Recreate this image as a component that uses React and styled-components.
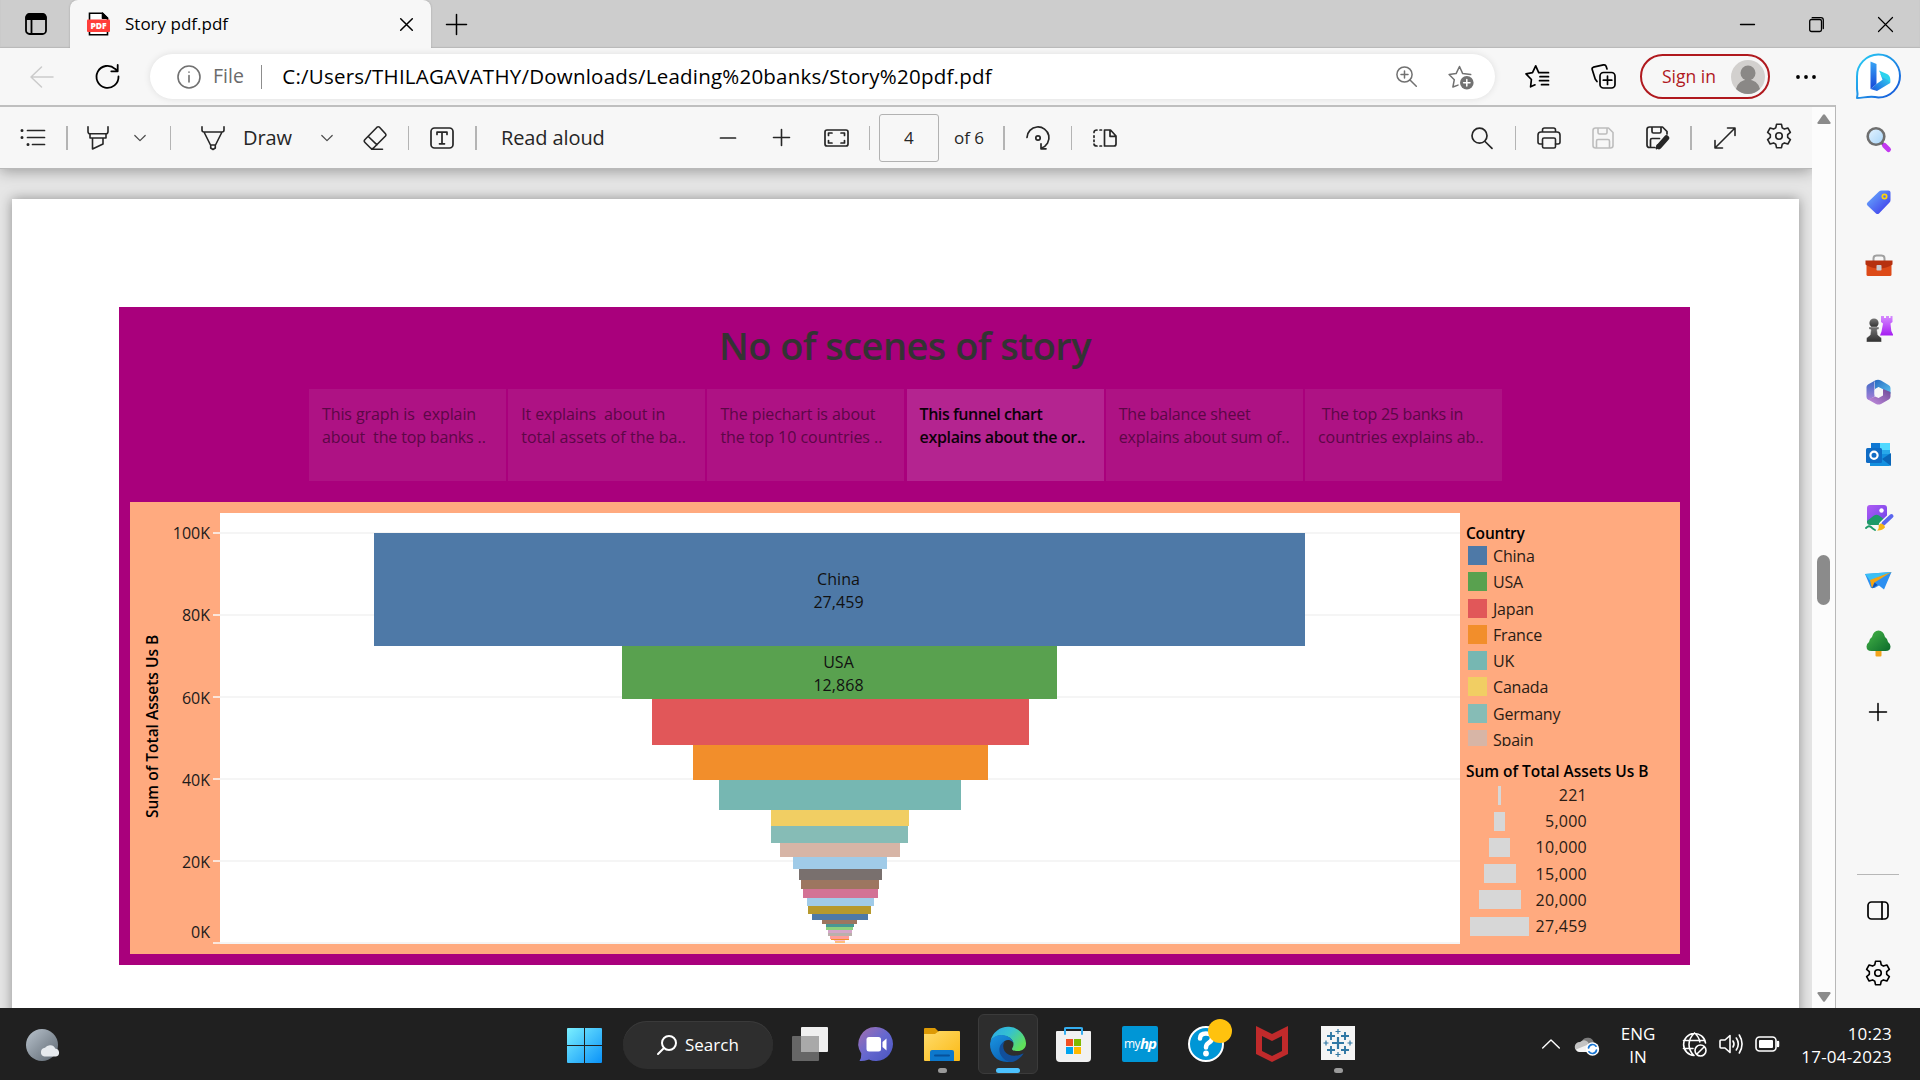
import React from "react";
import styled, { createGlobalStyle } from "styled-components";

const Global = createGlobalStyle`
  *, *::before, *::after { box-sizing: border-box; }
  html, body { margin: 0; padding: 0; overflow: hidden; }
  body { font-family: "Open Sans", "Noto Sans", sans-serif; color: #000; }
`;

const Screen = styled.div`
  width: 1920px;
  height: 1080px;
  display: flex;
  flex-direction: column;
  overflow: hidden;
  background: #f7f7f7;
`;

const Icon = styled.svg.attrs((p) => ({
  viewBox: p.viewBox || "0 0 24 24",
  width: p.$w || 24,
  height: p.$h || p.$w || 24,
  fill: p.fill || "none",
}))`
  flex: none;
  display: block;
  margin-left: ${(p) => p.$ml || 0}px;
  margin-top: ${(p) => p.$mt || 0}px;
  color: ${(p) => p.$c || "#000"};
  stroke: ${(p) => (p.$plain ? "none" : "currentColor")};
  stroke-width: ${(p) => p.$s || 1.6};
  stroke-linecap: round;
  stroke-linejoin: round;
  overflow: visible;
`;

const Label = styled.span`
  flex: none;
  white-space: pre;
  font-size: ${(p) => p.$size || 17}px;
  line-height: 1.36;
  letter-spacing: ${(p) => p.$ls || 0}px;
  color: ${(p) => p.$c || "#000"};
  margin-left: ${(p) => p.$ml || 0}px;
  margin-top: ${(p) => p.$mt || 0}px;
`;

const Rule = styled.i`
  flex: none;
  width: ${(p) => p.$w || 1}px;
  height: 24px;
  background: ${(p) => p.$c || "#b4b4b4"};
  margin-left: ${(p) => p.$ml || 0}px;
`;

/* ---------- tab strip ---------- */

const TabStrip = styled.header`
  flex: none;
  height: 48px;
  display: flex;
  align-items: center;
  background: #cdcdcd;
  box-shadow: inset 0 -1px 1px #b9b9b9;
`;

const Tab = styled.div`
  width: 361px;
  height: 48px;
  margin-left: 23px;
  padding: 0 18px 0 17px;
  display: flex;
  align-items: center;
  background: #f7f7f7;
  border-radius: 8px 8px 0 0;
  box-shadow: 0 0 2px #9b9b9b;
  clip-path: inset(0 -3px 0 -3px);
`;

const Push = styled.div`
  flex: 1;
`;

const WindowButtons = styled.div`
  display: flex;
  gap: 54px;
  padding-right: 27px;
`;

/* ---------- address toolbar ---------- */

const NavBar = styled.div`
  flex: none;
  height: 57px;
  display: flex;
  align-items: center;
  background: #f7f7f7;
`;

const Address = styled.div`
  width: 1345px;
  height: 45px;
  margin-left: 30px;
  padding-left: 27px;
  display: flex;
  align-items: center;
  background: #fff;
  border-radius: 23px;
  box-shadow: 0 0 7px rgba(0, 0, 0, 0.1);
`;

const SignIn = styled.div`
  width: 130px;
  height: 45px;
  margin-left: 24px;
  padding-left: 20px;
  display: flex;
  align-items: center;
  border: 2px solid #b0191e;
  border-radius: 23px;
`;

/* ---------- body ---------- */

const Body = styled.div`
  flex: none;
  height: 903px;
  display: flex;
`;

const Viewer = styled.main`
  width: 1836px;
  display: flex;
  border-top: 2px solid #bfbfbf;
  border-right: 1px solid #b8b8b8;
`;

const Pane = styled.div`
  width: 1812px;
  display: flex;
  flex-direction: column;
  overflow: hidden;
`;

const PdfBar = styled.div`
  flex: none;
  height: 62px;
  display: flex;
  align-items: center;
  background: #f7f7f7;
  border-bottom: 1px solid #b9b9b9;
  box-shadow: 0 2px 14px rgba(0, 0, 0, 0.34);
  z-index: 1;
`;

const PageInput = styled.div`
  width: 60px;
  height: 48px;
  margin-left: 9px;
  display: flex;
  align-items: center;
  justify-content: center;
  border: 1px solid #b2b2b2;
  border-radius: 3px;
`;

const Canvas = styled.div`
  flex: 1;
  padding: 30px 13px 0 12px;
  background: #e6e6e6;
  overflow: hidden;
`;

const Sheet = styled.div`
  height: 900px;
  padding: 108px 109px 0 107px;
  background: #fff;
  box-shadow: 0 0 12px rgba(0, 0, 0, 0.38);
`;

const Scrollbar = styled.div`
  flex: 1;
  display: flex;
  flex-direction: column;
  align-items: center;
  padding: 7px 0 6px;
  background: #fcfcfc;
`;

const Thumb = styled.div`
  width: 13px;
  height: 50px;
  margin: 431px 0 auto;
  border-radius: 7px;
  background: #8b8b8b;
`;

/* ---------- story dashboard ---------- */

const Story = styled.section`
  height: 658px;
  display: flex;
  flex-direction: column;
  background: #a9007c;
  padding: 15px 10px 11px 11px;
`;

const Title = styled.h1`
  margin: 0;
  height: 52px;
  line-height: 47px;
  text-align: center;
  font-size: 38px;
  font-weight: 600;
  letter-spacing: -0.55px;
  color: #333;
`;

const Points = styled.div`
  display: flex;
  gap: 2.2px;
  margin: 15px 0 21px 179px;
`;

const Point = styled.div`
  width: 197px;
  height: 92px;
  padding: 14px 0 0 13px;
  white-space: pre;
  font-size: 16px;
  line-height: 23.4px;
  font-weight: ${(p) => (p.$active ? 600 : 500)};
  color: ${(p) => (p.$active ? "#0c0009" : "#5c0747")};
  background: ${(p) => (p.$active ? "#b42490" : "#ae1284")};
`;

const PointLine = styled.div`
  letter-spacing: ${(p) => p.$ls}px;
`;

const Chart = styled.div`
  height: 452px;
  display: flex;
  padding-top: 11px;
  background: #ffaa7f;
`;

const AxisTitle = styled.div`
  width: 44px;
  height: 427px;
  display: flex;
  align-items: center;
  justify-content: center;
  writing-mode: vertical-rl;
  transform: rotate(180deg);
  font-size: 15.5px;
  font-weight: 600;
`;

const AxisLabels = styled.div`
  width: 36px;
  padding-top: 9px;
  display: flex;
  flex-direction: column;
  align-items: flex-end;
  gap: 60.3px;
  & > :last-child { margin-top: -12px; }
`;

const AxisLabel = styled.span`
  height: 22px;
  line-height: 22px;
  font-size: 16px;
  color: #1b1b1b;
`;

const Lines = styled.div`
  grid-area: 1 / 1;
  width: ${(p) => p.$w};
  height: 431px;
  margin-left: ${(p) => p.$ml || 0}px;
  padding-top: 19px;
  display: flex;
  flex-direction: column;
  justify-content: space-between;
`;

const Line = styled.i`
  height: 2px;
  background: ${(p) => p.$c};
`;

const Plot = styled.div`
  width: 1240px;
  height: 431px;
  display: grid;
  background: #fff;
`;

const Funnel = styled.div`
  grid-area: 1 / 1;
  padding-top: 20px;
  display: flex;
  flex-direction: column;
  align-items: center;
`;

const Bar = styled.div`
  flex: none;
  width: ${(p) => p.$w}px;
  height: ${(p) => p.$h}px;
  margin-right: ${(p) => p.$mr || 0}px;
  background: ${(p) => p.$c};
  display: flex;
  align-items: center;
  justify-content: center;
  white-space: pre;
  text-align: center;
  font-size: 16px;
  line-height: 23.5px;
  color: #111;
`;

const BarLabel = styled.span`
  padding: 3px 2px 0 0;
  letter-spacing: 0.05px;
`;

const Legends = styled.aside`
  padding: 9px 0 0 6px;
  display: flex;
  flex-direction: column;
`;

const LegendTitle = styled.h2`
  margin: 0;
  height: 22px;
  line-height: 22px;
  font-size: 15.5px;
  font-weight: 600;
  letter-spacing: ${(p) => p.$ls || 0}px;
  white-space: nowrap;
`;

const ColorList = styled.div`
  height: 202px;
  padding: 2px 0 0 2px;
  margin-bottom: 14px;
  overflow: hidden;
`;

const ColorRow = styled.div`
  height: 26.25px;
  display: flex;
  gap: 6px;
  font-size: 16px;
  letter-spacing: -0.2px;
  line-height: 21px;
  color: #2a1c15;
`;

const Swatch = styled.i`
  width: 19px;
  height: 19px;
  background: ${(p) => p.$c};
`;

const SizeRow = styled.div`
  height: 26.2px;
  display: grid;
  grid-template-columns: 67px 54px;
  align-items: center;
  font-size: 16px;
  letter-spacing: 0.25px;
  color: #2a1c15;
  & > span { text-align: right; }
`;

const SizeMark = styled.i`
  justify-self: center;
  width: ${(p) => p.$w}px;
  height: 19px;
  background: #d7d7d7;
`;

/* ---------- edge sidebar ---------- */

const Sidebar = styled.nav`
  width: 84px;
  padding: 3px 0 4px;
  display: flex;
  flex-direction: column;
`;

const Slot = styled.div`
  height: 63px;
  display: flex;
  align-items: center;
  justify-content: center;
  margin-top: ${(p) => p.$mt || 0}px;
`;

const SideRule = styled.i`
  width: 42px;
  height: 1px;
  margin: auto 21px 3px;
  background: #b7b7b7;
`;

/* ---------- taskbar ---------- */

const Taskbar = styled.footer`
  flex: none;
  height: 72px;
  display: flex;
  align-items: center;
  background: #202020;
`;

const SearchPill = styled.div`
  width: 150px;
  height: 48px;
  margin-top: 1px;
  margin-left: 21px;
  padding-left: 34px;
  display: flex;
  align-items: center;
  border-radius: 24px;
  background: #2e2e2e;
  box-shadow: inset 0 1px 0 #3a3a3a;
`;

const Task = styled.div`
  width: 60px;
  height: 60px;
  margin-left: ${(p) => p.$ml || 0}px;
  padding-top: 11px;
  display: flex;
  flex-direction: column;
  align-items: center;
  justify-content: space-between;
  border: 1px solid ${(p) => (p.$on ? "#3b3b3b" : "transparent")};
  border-radius: 6px;
  background: ${(p) => (p.$on ? "#2d2d2d" : "transparent")};
`;

const Running = styled.i`
  width: ${(p) => p.$w}px;
  height: 5px;
  border-radius: 3px;
  background: ${(p) => p.$c};
`;

const HpTile = styled.div`
  width: 36px;
  height: 36px;
  display: flex;
  align-items: center;
  justify-content: center;
  border-radius: 2px;
  background: #0096d6;
  color: #fff;
  font-size: 12px;
  line-height: 1;
  letter-spacing: -0.6px;
  & > b { font-style: italic; font-size: 15px; letter-spacing: -1px; padding-bottom: 1px; }
`;

const Stack = styled.div`
  margin-top: 1px;
  margin-left: ${(p) => p.$ml}px;
  width: ${(p) => p.$w}px;
  text-align: ${(p) => p.$align};
  white-space: pre;
  font-size: 17px;
  line-height: 23px;
  letter-spacing: ${(p) => p.$ls || 0}px;
  color: #fff;
`;

/* ---------- data ---------- */

const points = [
  [["This graph is  explain", -0.1], ["about  the top banks ..", -0.15]],
  [["It explains  about in", -0.1], ["total assets of the ba..", 0.05]],
  [["The piechart is about", -0.1], ["the top 10 countries ..", -0.03]],
  [["This funnel chart", -0.45], ["explains about the or..", -0.34]],
  [["The balance sheet", -0.2], ["explains about sum of..", -0.12]],
  [[" The top 25 banks in", -0.25], ["countries explains ab..", -0.05]],
];

const bars = [
  [931, 113, "#4e79a7", "China\n27,459", 1],
  [435, 53, "#59a14f", "USA\n12,868", 1],
  [377, 46, "#e15759"],
  [295, 35, "#f28e2b"],
  [242, 30, "#76b7b2"],
  [138, 16, "#f1ce63"],
  [137, 17, "#86bcb6", null, 1],
  [120, 14, "#d7b5a6"],
  [94, 12, "#a0cbe8"],
  [83, 11, "#79706e"],
  [78, 9, "#9d7660"],
  [75, 9, "#d37295"],
  [67, 8, "#a0cbe8"],
  [63, 8, "#b6992d", null, 1],
  [56, 6, "#4e79a7"],
  [35, 4, "#9d7660", null, 1],
  [28, 3, "#499894"],
  [27, 3, "#8cd17d", null, 1],
  [24, 3, "#d4a6c8"],
  [24, 3, "#bab0ac"],
  [19, 3, "#ff9d9a", null, 1],
  [18, 1, "#f28e2b"],
  [11, 1, "#fabfd2", null, 1],
  [10, 2, "#ffbe7d"],
];

const countries = [
  ["China", "#4e79a7"],
  ["USA", "#59a14f"],
  ["Japan", "#e15759"],
  ["France", "#f28e2b"],
  ["UK", "#76b7b2"],
  ["Canada", "#f1ce63"],
  ["Germany", "#86bcb6"],
  ["Spain", "#d7b5a6"],
];

const sizes = [
  ["221", 3],
  ["5,000", 11],
  ["10,000", 21],
  ["15,000", 32],
  ["20,000", 42],
  ["27,459", 59],
];

const ink = "#262626";

const Chevron = (p) => (
  <Icon $w={12} $h={8} viewBox="0 0 12 8" $c="#4a4a4a" $s={1.2} {...p}>
    <path d="M.8 1.5 6 6.7l5.2-5.2" />
  </Icon>
);

const Gear = (p) => (
  <Icon viewBox="0 0 24 24" $s={1.5} {...p}>
    <path d="M9.7 1.2h4.6l.7 3.3 2 1.1 3.200-1 2.3 4-2.500 2.200v2.400l2.500 2.200-2.300 4-3.200-1-2 1.100-.7 3.300H9.700L9 19.500l-2-1.100-3.200 1-2.300-4L4 13.200v-2.400L1.500 8.600l2.300-4 3.200 1 2-1.100z" />
    <circle cx="12" cy="12" r="3" />
  </Icon>
);

function TopTabs() {
  return (
    <TabStrip>
      <Icon $w={22} $ml={25} viewBox="0 0 22 22" $s={1.8}>
        <rect x="1" y="1" width="20" height="20" rx="3.5" />
        <path d="M1.500 6V4.500a3 3 0 0 1 3-3h13a3 3 0 0 1 3 3V6z" fill="#000" />
        <path d="M6.500 7v13.500" />
      </Icon>
      <Tab>
        <Icon $w={23} $h={24} viewBox="0 0 23 24" $s={1.6}>
          <path d="M2.500 1.200h13l5 5v16.600h-18z" fill="#fff" strokeLinejoin="miter" />
          <path d="M15.500 1.200v5h5z" fill="#000" />
          <rect x="0" y="7.500" width="23" height="12.500" rx="1" fill="#ff3e3a" stroke="none" />
          <text x="11.500" y="17" fill="#fff" stroke="none" fontSize="8.500" fontWeight="800" textAnchor="middle">PDF</text>
        </Icon>
        <Label $ml={15} $size={17}>Story pdf.pdf</Label>
        <Push />
        <Icon $w={13} viewBox="0 0 13 13" $s={1.5}><path d="m.7.7 11.600 11.600M12.300.7.7 12.300" /></Icon>
      </Tab>
      <Icon $w={21} $ml={15} viewBox="0 0 21 21" $s={1.5}><path d="M10.500.5v20M.5 10.500h20" /></Icon>
      <Push />
      <WindowButtons>
        <Icon $w={15} viewBox="0 0 15 15" $s={1.3}><path d="M.5 7.500h14" /></Icon>
        <Icon $w={15} viewBox="0 0 15 15" $s={1.3}>
          <rect x=".7" y="2.500" width="11.800" height="12" rx="1.800" />
          <path d="M3.200.7H12a2.300 2.300 0 0 1 2.300 2.300v8.500" />
        </Icon>
        <Icon $w={15} viewBox="0 0 15 15" $s={1.2}><path d="m.5.5 14 14M14.500.5l-14 14" /></Icon>
      </WindowButtons>
    </TabStrip>
  );
}

function Navigation() {
  return (
    <NavBar>
      <Icon $w={24} $h={22} $ml={30} viewBox="0 0 24 22" $c="#cbcbcb" $s={1.5}><path d="M23 11H1M11.500 1 1 11l10.500 10" /></Icon>
      <Icon $w={25} $ml={41} viewBox="0 0 25 25" $s={1.8}><path d="M23.500 12.500A11 11 0 1 1 20 4.800L22.700 7M22.700 1v6.300h-6.400" /></Icon>
      <Address>
        <Icon $w={24} viewBox="0 0 24 24" $c="#717171" $s={1.6}>
          <circle cx="12" cy="12" r="11" /><path d="M12 10.500V17M12 7v.3" />
        </Icon>
        <Label $ml={12} $size={19.5} $c="#6b6b6b">File</Label>
        <Rule $ml={17} $w={1.5} $c="#8d8d8d" />
        <Label $ml={20} $size={20.5} $ls={0.22}>C:/Users/THILAGAVATHY/Downloads/Leading%20banks/Story%20pdf.pdf</Label>
        <Push />
        <Icon $w={21} viewBox="0 0 21 21" $c="#717171" $s={1.500}>
          <circle cx="8.500" cy="8.500" r="7.600" /><path d="m14 14 6.300 6.300M8.500 5v7M5 8.500h7" />
        </Icon>
        <Icon $w={26} $ml={31} viewBox="0 0 26 25" $c="#717171" $s={1.500}>
          <path d="M10 20.600 4.900 22.500l1.400-7.300L1.100 10l7-.9L11.500 2l3.200 7.100 8 1" />
          <circle cx="18.800" cy="18.200" r="6.800" fill="#717171" stroke="none" />
          <path d="M18.800 15v6.400M15.600 18.200H22" stroke="#fff" />
        </Icon>
        <Icon $w={21} viewBox="0 0 21 21" $plain />
      </Address>
      <Icon $w={25} $ml={30} viewBox="0 0 25 24" $s={1.700}>
        <path d="M10 20.300l-4.400 2 .8-7.300L1 9.300l6.500-1.100L10.700 1.300l3 6.900h9.800M15 12.200h8.500M14.500 16.200h9M16.500 20.200h7" />
      </Icon>
      <Icon $w={25} $ml={41} viewBox="0 0 25 25" $s={1.700}>
        <rect x="9" y="8.500" width="15" height="15.500" rx="3.500" />
        <path d="M16.500 12v8.500M12.300 16.200h8.500M6 17.500 4.200 15 1.200 5.600c-.3-1 0-2 1.200-2.400l10-2.300c1.500-.3 2.400.2 2.800 1.500l.8 2.600" />
      </Icon>
      <SignIn>
        <Label $size={17.5} $c="#b0191e">Sign in</Label>
        <Icon $w={34} $ml={15} viewBox="0 0 34 34" $plain>
          <circle cx="17" cy="17" r="17" fill="#d2d0ce" />
          <circle cx="17" cy="13" r="7.500" fill="#8a8886" />
          <path d="M5 29a12.300 12.300 0 0 1 24 0 17 17 0 0 1-24 0z" fill="#8a8886" />
        </Icon>
      </SignIn>
      <Icon $w={20} $h={4} $ml={26} viewBox="0 0 20 4" $plain fill="#000">
        <circle cx="2" cy="2" r="1.900" /><circle cx="10" cy="2" r="1.900" /><circle cx="18" cy="2" r="1.900" />
      </Icon>
      <Icon $w={45} $ml={40} viewBox="0 0 45 45" $plain>
        <defs>
          <linearGradient id="bingRing" x1="0" y1="0" x2="1" y2="1"><stop offset="0" stopColor="#29d0f5" /><stop offset="1" stopColor="#1450d8" /></linearGradient>
          <linearGradient id="bingStem" x1="0" y1="0" x2="0" y2="1"><stop offset="0" stopColor="#37a5f5" /><stop offset="1" stopColor="#1646d8" /></linearGradient>
          <linearGradient id="bingBowl" x1="0" y1="1" x2="1" y2="0"><stop offset="0" stopColor="#1c56e0" /><stop offset="1" stopColor="#35dff0" /></linearGradient>
        </defs>
        <path d="M1 44q1-4 0-9V22.500A21.500 21.500 0 1 1 22.500 43.500C13 41.500 8 44 1 44z" fill="#fff" stroke="url(#bingRing)" strokeWidth="2" />
        <path d="m14.500 7.500 6 2.400v20l-6 5z" fill="url(#bingStem)" />
        <path d="m20.500 30 6-4.200-2.200-6 7.500 3.200c2.500 1.300 3 3.500 2.400 6L21 37l-6.500-2z" fill="url(#bingBowl)" />
        <path d="m23 16.500 8 3.500c3.500 2 4 5.500 2.500 8.500-.8-2-1.700-2.800-3.500-3.500l-4-2z" fill="#2cd3ee" />
      </Icon>
    </NavBar>
  );
}

function PdfToolbar() {
  return (
    <PdfBar>
      <Icon $w={25} $h={17} $ml={20} viewBox="0 0 25 17" $c={ink} $s={1.700}>
        <path d="M7.500 1.500h17M7.500 8.500h17M12.500 15.500h12" />
        <path d="M2 1.500v.1M2 8.500v.1M8 15.500v.1" strokeWidth="3" />
      </Icon>
      <Rule $ml={21} $w={2} />
      <Icon $w={22} $h={24} $ml={19} viewBox="0 0 22 24" $c={ink} $s={1.600}>
        <path d="M1 .7v4.800q0 2.300 2 2.300h16q2 0 2-2.300V.7M3 8v4h16V8M5.500 12v11l10.500-5v-6" />
      </Icon>
      <Chevron $ml={25} />
      <Rule $ml={24} />
      <Icon $w={24} $h={24} $ml={30} viewBox="0 0 24 24" $c={ink} $s={1.600}>
        <path d="M1 .7V4q0 2 2 2h18q2 0 2-2V.7M3 6l6.500 13h5L21 6M9.700 19v3l2.300 1.500 2.300-1.500v-3" />
      </Icon>
      <Label $ml={18} $mt={1} $size={20} $c={ink} $ls={-0.1}>Draw</Label>
      <Chevron $ml={29} />
      <Icon $w={24} $h={24} $ml={30} viewBox="0 0 24 24" $c={ink} $s={1.600}>
        <path d="M14 1.200 2 13.500q-1.500 1.500 0 3l5.500 5.500q1.500 1.500 3 0L22.500 10q1-1.200 0-2.300L16.500 1.200q-1.300-1-2.500 0zM5.300 10.500l8.700 8.300M8.500 23.300h11" />
      </Icon>
      <Rule $ml={21} />
      <Icon $w={24} $h={22} $ml={21} viewBox="0 0 24 22" $c={ink} $s={1.700}>
        <rect x="1" y="1" width="22" height="20" rx="3.500" />
        <path d="M7 7.500V5.200h10v2.300M12 5.200v11.600M9.500 16.800h5" />
      </Icon>
      <Rule $ml={21} $w={2} />
      <Label $ml={24} $mt={1} $size={20} $c={ink} $ls={-0.1}>Read aloud</Label>
      <Push />
      <Icon $w={16} viewBox="0 0 16 16" $c={ink} $s={1.700}><path d="M.5 8h15" /></Icon>
      <Icon $w={17} $ml={37} viewBox="0 0 17 17" $c={ink} $s={1.600}><path d="M8.500.5v16M.5 8.500h16" /></Icon>
      <Icon $w={25} $h={18} $ml={34} viewBox="0 0 25 18" $c={ink} $s={1.700}>
        <rect x="1" y="1" width="23" height="16" rx="2" />
        <path d="M4.500 6.500V4H8M17 4h3.500v2.500M20.500 11.500V14H17M8 14H4.500v-2.500" />
      </Icon>
      <Rule $ml={20} />
      <PageInput><Label $size={17} $c={ink}>4</Label></PageInput>
      <Label $ml={15} $size={17} $c={ink}>of 6</Label>
      <Rule $ml={19} $w={2} />
      <Icon $w={24} $h={24} $ml={21} viewBox="0 0 24 24" $c={ink} $s={1.700}>
        <path d="M1 11.500A11 10.800 0 1 1 15.500 22M20 22.800h-5v-5" /><circle cx="12" cy="12" r="2.200" />
      </Icon>
      <Rule $ml={21} />
      <Icon $w={24} $h={18} $ml={21} viewBox="0 0 24 18" $c={ink} $s={1.700}>
        <path d="M11.500 1h6L23 7v8q0 2-2 2h-9.500zM17 1.200V7.300h5.800" />
        <path d="M8.500 1H7M4 1Q1 1 1 3.500M1 6.800v1.500M1 11v1.500M1 15q0 2 3 2M7 17h1.500" />
      </Icon>
      <Icon $w={22} $ml={354} viewBox="0 0 22 22" $c={ink} $s={1.700}>
        <circle cx="8.500" cy="8.700" r="7.500" /><path d="m14 14.500 7 6.800" />
      </Icon>
      <Rule $ml={22} />
      <Icon $w={24} $h={22} $ml={21} viewBox="0 0 24 22" $c={ink} $s={1.600}>
        <path d="M5.500 5V3q0-2 2-2h9q2 0 2 2v2M5.500 17H3q-2 0-2-2V8q0-3 3-3h16q3 0 3 3v7q0 2-2 2h-2.500" />
        <rect x="5.500" y="11" width="13" height="10" rx="1.500" />
      </Icon>
      <Icon $w={22} $ml={31} viewBox="0 0 22 22" $c="#bdbdbd" $s={1.600}>
        <path d="M3.500 1h13L21 5.500v13q0 2.500-2.500 2.500h-15Q1 21 1 18.500v-15Q1 1 3.500 1zM6 1v4.500q0 1.500 1.500 1.500h6q1.500 0 1.500-1.500V1M4.500 21v-7q0-1.500 1.500-1.500h10q1.500 0 1.500 1.500v7" />
      </Icon>
      <Icon $w={23} $ml={32} viewBox="0 0 23 23" $c={ink} $s={1.700}>
        <path d="M9 21.500H3.500Q1 21.500 1 19V3.500Q1 1 3.500 1h13L21 5.500V8M6 1v4.500Q6 7 7.500 7h6Q15 7 15 5.500V1M4.500 21v-7q0-1.500 1.500-1.500h7.500" />
        <path d="m13 20.500 7.500-8.500" strokeWidth="5.500" /><path d="m10.500 22.500 1-3.500 2 2z" fill={ink} />
      </Icon>
      <Rule $ml={21} $w={2} />
      <Icon $w={22} $ml={22} viewBox="0 0 22 22" $c={ink} $s={1.600}>
        <path d="M1.500 20.500 20.500 1.500M13.500 1H21v7.500M1 13.500V21h7.500" />
      </Icon>
      <Gear $w={26} $ml={30} $mt={-3} $c={ink} $s={1.500} />
      <Icon $w={20} $plain />
    </PdfBar>
  );
}

function Dashboard() {
  return (
    <Story>
      <Title>No of scenes of story</Title>
      <Points>
        {points.map((lines, i) => (
          <Point key={i} $active={i === 3}>
            {lines.map(([text, ls]) => <PointLine key={text} $ls={ls}>{text}</PointLine>)}
          </Point>
        ))}
      </Points>
      <Chart>
        <AxisTitle>Sum of Total Assets Us B</AxisTitle>
        <AxisLabels>
          {["100K", "80K", "60K", "40K", "20K", "0K"].map((t) => <AxisLabel key={t}>{t}</AxisLabel>)}
        </AxisLabels>
        <Lines $w="7px" $ml={3}>{[0, 1, 2, 3, 4, 5].map((i) => <Line key={i} $c="#fbe6dc" />)}</Lines>
        <Plot>
          <Lines $w="100%">{[0, 1, 2, 3, 4, 5].map((i) => <Line key={i} $c="#f5f5f5" />)}</Lines>
          <Funnel>
            {bars.map(([w, h, c, text, mr], i) => (
              <Bar key={i} $w={w} $h={h} $c={c} $mr={mr}>{text && <BarLabel>{text}</BarLabel>}</Bar>
            ))}
          </Funnel>
        </Plot>
        <Legends>
          <LegendTitle $ls={-0.2}>Country</LegendTitle>
          <ColorList>
            {countries.map(([name, c]) => (
              <ColorRow key={name}><Swatch $c={c} />{name}</ColorRow>
            ))}
          </ColorList>
          <LegendTitle $ls={-0.03}>Sum of Total Assets Us B</LegendTitle>
          {sizes.map(([n, w]) => (
            <SizeRow key={n}><SizeMark $w={w} /><span>{n}</span></SizeRow>
          ))}
        </Legends>
      </Chart>
    </Story>
  );
}

function EdgeSidebar() {
  return (
    <Sidebar>
      <Slot>
        <Icon $w={25} viewBox="0 0 25 25" $plain>
          <defs><linearGradient id="lens" x1="0" y1="0" x2="1" y2="1"><stop offset="0" stopColor="#e6f4ff" /><stop offset="1" stopColor="#a5d3f8" /></linearGradient></defs>
          <path d="m15 15 3 3" stroke="#555" strokeWidth="3" />
          <path d="m18.500 18.500 4 4" stroke="#c239f0" strokeWidth="5" strokeLinecap="round" />
          <circle cx="10" cy="9.500" r="8.300" fill="url(#lens)" stroke="#6f6f6f" strokeWidth="2.600" />
        </Icon>
      </Slot>
      <Slot>
        <Icon $w={25} viewBox="0 0 25 25" $plain>
          <defs><linearGradient id="tag" x1="0" y1="0" x2="1" y2="1"><stop offset="0" stopColor="#6cb6ff" /><stop offset="1" stopColor="#3a2ee8" /></linearGradient></defs>
          <path d="M13 1.500Q14 .5 15.500.5h7q2 0 2 2V10q0 1.500-1 2.500L13 23.500q-1.500 1.200-3 0L1.500 15.500q-1.500-1.500 0-3z" fill="url(#tag)" />
          <circle cx="18.500" cy="6.500" r="2.200" fill="none" stroke="#fcd30a" strokeWidth="1.700" />
        </Icon>
      </Slot>
      <Slot>
        <Icon $w={28} $h={24} $mt={1} $ml={1} viewBox="0 0 28 24" $plain>
          <path d="M8.500 7V4.500q0-3 3-3h5q3 0 3 3V7" fill="none" stroke="#a0a0a0" strokeWidth="2" />
          <rect x="1.500" y="8" width="25" height="14" rx="1.500" fill="#dd4a18" />
          <path d="M.5 6.500h27v4q-6 4-13.500 4t-13.500-4z" fill="#b6300f" />
          <rect x="11.500" y="11" width="5" height="5.500" rx=".8" fill="#c9c9cf" />
        </Icon>
      </Slot>
      <Slot>
        <Icon $w={28} $h={28} $ml={1} viewBox="0 0 28 28" $plain>
          <defs>
            <linearGradient id="pawn" x1="0" y1="0" x2="0" y2="1"><stop offset="0" stopColor="#777" /><stop offset="1" stopColor="#2f2f2f" /></linearGradient>
            <linearGradient id="rook" x1="0" y1="0" x2="0" y2="1"><stop offset="0" stopColor="#d68bff" /><stop offset="1" stopColor="#a51df2" /></linearGradient>
          </defs>
          <path d="M16 1h3v2h2V1h3v2h1.500V1h2v6l-2 1.500.8 7.500 1.700 3.500v1H15l1.500-4L18 8.500 16 7z" fill="url(#rook)" />
          <circle cx="9" cy="8" r="4.600" fill="url(#pawn)" />
          <path d="M4 12h10v2l-2 .7.8 5.300 3.700 3v4H1.500v-4L5.200 20l.8-5.300L4 14z" fill="url(#pawn)" stroke="#f7f7f7" strokeWidth=".4" />
        </Icon>
      </Slot>
      <Slot>
        <Icon $w={25} $h={26} viewBox="0 0 25 26" $plain>
          <defs>
            <linearGradient id="m1" x1="0" y1="0" x2="0" y2="1"><stop offset="0" stopColor="#3c6bc5" /><stop offset="1" stopColor="#a67fd8" /></linearGradient>
            <linearGradient id="m2" x1="0" y1="0" x2="1" y2="1"><stop offset="0" stopColor="#2868c0" /><stop offset="1" stopColor="#59c4f0" /></linearGradient>
            <linearGradient id="m3" x1="0" y1="1" x2="1" y2="0"><stop offset="0" stopColor="#c48fe0" /><stop offset="1" stopColor="#6c4796" /></linearGradient>
          </defs>
          <path d="M9.500 1.200 2 5.500Q.5 6.500.5 8v10q0 2 2 3l6-3.500V3z" fill="url(#m1)" />
          <path d="M9 1.500q3-1.500 6 0L22.500 6q2 1 2 3v6L17 10.200 12.500 8 9 10z" fill="url(#m2)" />
          <path d="M24.500 13v4.500q0 2-1.700 3L15 25q-2.500 1-5 0l-8-4.500 7-3 3.500 1.500 4.500-2.500V10z" fill="url(#m3)" />
          <path d="M12.500 8.500 17 11v4.500L12.500 18 8.500 15.500V11z" fill="#f7f7f7" />
        </Icon>
      </Slot>
      <Slot>
        <Icon $w={25} viewBox="0 0 25 25" $plain>
          <rect x="5" y="1" width="19" height="14" fill="#28a8ea" />
          <path d="M14 1h10v7H14z" fill="#50d9ff" /><path d="M5 1h9v7H5z" fill="#0f78d4" />
          <path d="M4 12h21v10q0 2-2 2H4z" fill="#1490df" /><path d="m25 11-9 6 9 7z" fill="#0a66b8" />
          <rect x="0" y="6" width="16" height="15" rx="1.500" fill="#0f6cc5" />
          <circle cx="8" cy="13.300" r="3.600" fill="none" stroke="#fff" strokeWidth="2.200" />
        </Icon>
      </Slot>
      <Slot>
        <Icon $w={28} $ml={1} viewBox="0 0 28 28" $plain>
          <defs><linearGradient id="photo" x1="0" y1="0" x2="1" y2="1"><stop offset="0" stopColor="#b05cf4" /><stop offset="1" stopColor="#6c43e8" /></linearGradient></defs>
          <rect x="2" y="1" width="20" height="19" rx="3" fill="url(#photo)" />
          <path d="m2 17 7-5.500q2.500-1.500 5 0l6 4.500-4 5H5q-3 0-3-3z" fill="#1d9a68" />
          <circle cx="16.500" cy="6.500" r="2.200" fill="#fff" />
          <path d="m26.500 12-9 8.500" stroke="#f7f7f7" strokeWidth="7" strokeLinecap="round" />
          <path d="m26.500 12-8 7.500" stroke="#5b66ee" strokeWidth="4" strokeLinecap="round" />
          <path d="M15.500 19.500q4 .5 4.500 4-3 3.500-8 3 2.500-2 1.500-5z" fill="#f5b515" />
          <path d="M1 24q3-3 5-1t4 3" fill="none" stroke="#1d9a68" strokeWidth="1.800" />
        </Icon>
      </Slot>
      <Slot>
        <Icon $w={27} $h={20} viewBox="0 0 27 20" $plain>
          <path d="M0 3 26.500 1 19 18.500l-5-4-4.500 2.500L6 17z" fill="#2c8ff0" />
          <path d="M0 3 26.500 1 5 9.500z" fill="#3cc0f5" />
          <path d="M26.500 1 5 9l2 8.500 2.500-6z" fill="#f7a410" />
          <path d="m9.500 11.500-2.500 6 5.500-3.500z" fill="#1552b5" />
        </Icon>
      </Slot>
      <Slot>
        <Icon $w={25} $h={27} viewBox="0 0 25 27" $plain>
          <defs><linearGradient id="tree" x1="0" y1="0" x2="1" y2="1"><stop offset="0" stopColor="#47b548" /><stop offset="1" stopColor="#0b6b2b" /></linearGradient></defs>
          <rect x="9.500" y="19" width="6" height="7.500" rx="1" fill="#f3a41c" />
          <path d="M12.500.5q5 0 6.500 6.500Q22 9 22 12q2.500 1.500 2.500 4.500 0 4.500-5 4.500h-14q-5 0-5-4.500Q.5 13.500 3 12q0-3 3-5Q7.500.5 12.500.5z" fill="url(#tree)" />
        </Icon>
      </Slot>
      <Slot $mt={5}>
        <Icon $w={18} $ml={-1} viewBox="0 0 18 18" $s={1.500}><path d="M9 .5v17M.5 9h17" /></Icon>
      </Slot>
      <SideRule />
      <Slot>
        <Icon $w={22} $h={19} $mt={1} viewBox="0 0 22 19" $s={1.700}><rect x="1" y="1" width="20" height="17" rx="3.500" /><path d="M15 1v17" /></Icon>
      </Slot>
      <Slot><Gear $w={26} $s={1.500} /></Slot>
    </Sidebar>
  );
}

function WindowsTaskbar() {
  return (
    <Taskbar>
      <Icon $w={34} $h={32} $ml={26} $mt={1} viewBox="0 0 34 32" $plain>
        <defs><linearGradient id="moon" x1="0" y1="0" x2="1" y2="1"><stop offset="0" stopColor="#b9c3cd" /><stop offset="1" stopColor="#5c6670" /></linearGradient></defs>
        <circle cx="16" cy="16" r="16" fill="url(#moon)" />
        <path d="M18.500 27.500a4.400 4.400 0 0 1 .5-8.700 6 6 0 0 1 10.500 1 3.900 3.900 0 0 1 .5 7.700z" fill="#e6eaee" />
      </Icon>
      <Icon $w={35} $ml={507} $mt={3} viewBox="0 0 35 35" $plain>
        <defs><linearGradient id="win" gradientUnits="userSpaceOnUse" x1="0" y1="0" x2="35" y2="35"><stop offset="0" stopColor="#7bf0ff" /><stop offset="1" stopColor="#0a92f8" /></linearGradient></defs>
        <path d="M0 1q0-1 1-1h16v17H0zM18 0h16q1 0 1 1v16H18zM0 18h17v17H1q-1 0-1-1zM18 18h17v16q0 1-1 1H18z" fill="url(#win)" />
      </Icon>
      <SearchPill>
        <Icon $w={20} viewBox="0 0 20 20" $c="#fff" $s={2}><circle cx="12" cy="8" r="7" /><path d="m7 13-6 6" /></Icon>
        <Label $ml={8} $mt={1} $size={17} $c="#fff">Search</Label>
      </SearchPill>
      <Task $ml={7}>
        <Icon $w={36} viewBox="0 0 36 36" $plain>
          <rect x="9" y="1" width="27" height="25" rx="1" fill="#f0f0f0" />
          <rect x="0" y="10" width="27" height="25" rx="1" fill="#666" />
          <rect x="9" y="10" width="18" height="16" fill="#a9a9a9" />
        </Icon>
      </Task>
      <Task $ml={6}>
        <Icon $w={36} viewBox="0 0 36 36" $plain>
          <defs><linearGradient id="chat" x1="0" y1="0" x2="1" y2="1"><stop offset="0" stopColor="#a56fae" /><stop offset=".5" stopColor="#6668cf" /><stop offset="1" stopColor="#4854c0" /></linearGradient></defs>
          <path d="M18 1a17 17 0 1 1-7 32.500Q5 35.500 1.500 35q2-3 1.800-7.500A17 17 0 0 1 18 1z" fill="url(#chat)" />
          <rect x="8.500" y="11" width="14.500" height="14.500" rx="2.500" fill="#fff" />
          <path d="m24.500 16 4-3.500v12l-4-3.500z" fill="#fff" />
        </Icon>
      </Task>
      <Task $ml={6}>
        <Icon $w={36} viewBox="0 0 36 36" $plain>
          <defs><linearGradient id="folder" x1="0" y1="0" x2="1" y2="1"><stop offset="0" stopColor="#ffdc6b" /><stop offset="1" stopColor="#fbb915" /></linearGradient></defs>
          <path d="M0 3q0-1 1-1h10l4 4v6H0z" fill="#dd9a05" />
          <path d="M0 8h11l4-3h20q1 0 1 1v28q0 1-1 1H1q-1 0-1-1z" fill="url(#folder)" />
          <path d="M6 35V26q0-2 2-2h20q2 0 2 2v9z" fill="#0d78cc" />
          <path d="M11 29.500h14" stroke="#07519a" strokeWidth="2" strokeLinecap="round" />
        </Icon>
        <Running $w={9} $c="#9a9a9a" />
      </Task>
      <Task $ml={6} $on>
        <Icon $w={36} viewBox="0 0 36 36" $plain>
          <defs>
            <linearGradient id="edgeTop" x1="0" y1="0" x2="1" y2=".6"><stop offset="0" stopColor="#2aa6e8" /><stop offset=".5" stopColor="#35c1d0" /><stop offset="1" stopColor="#60e05a" /></linearGradient>
            <linearGradient id="edgeLow" x1="0" y1="0" x2=".6" y2="1"><stop offset="0" stopColor="#1b95e2" /><stop offset="1" stopColor="#0a62b5" /></linearGradient>
          </defs>
          <path d="M.5 15A18 18 0 0 1 36 17c.2 5-3.500 8-8.500 8-4 0-5.500-1-5.500-2s1.500-2 1.500-5c0-5-6-9-12.500-8.500Q4.500 9.500.5 15z" fill="url(#edgeTop)" />
          <path d="M0 18C.5 12 6 9 11.500 9c7 0 12 4.500 12 9 0-1.500-2-4-5.500-4-5 0-8 5-6 11 2 5.500 6.500 9 12 10C9 39 0 30 0 18z" fill="url(#edgeLow)" />
          <path d="M15 15.500c-2 2-2.500 6-.5 9.500 3 5 11 6.500 18.500 2.500q.8-.4.300.6C30 33 25 36 20 36 13 34 8.500 28 9.500 22c.5-3 2.500-5.500 5.500-6.500z" fill="#114f9b" />
        </Icon>
        <Running $w={24} $c="#4cc2ff" />
      </Task>
      <Task $ml={5.5}>
        <Icon $w={35} $h={36} viewBox="0 0 35 36" $plain>
          <path d="M9 7V3q0-1 1-1h15q1 0 1 1v4" fill="none" stroke="#35aef0" strokeWidth="2" />
          <path d="M0 6q0-1 1-1h33q1 0 1 1v26q0 4-4 4H4q-4 0-4-4z" fill="#f1f1f1" />
          <path d="M9 2.500V8M26 2.500V8" stroke="#35aef0" strokeWidth="2" />
          <path d="M10 13h7v7h-7z" fill="#f25022" /><path d="M18 13h7v7h-7z" fill="#7fba00" />
          <path d="M10 21h7v7h-7z" fill="#00a4ef" /><path d="M18 21h7v7h-7z" fill="#ffb900" />
        </Icon>
      </Task>
      <Task $ml={6.5}><HpTile>my<b>hp</b></HpTile></Task>
      <Task $ml={6}>
        <Icon $w={36} viewBox="0 0 36 36" $plain>
          <circle cx="18" cy="18" r="17" fill="#0096d6" stroke="#fff" strokeWidth="2" />
          <path d="M12 12.500q0-5 6-5t6 4.500q0 3-3.500 5-2.500 1.500-2.500 4.500" fill="none" stroke="#fff" strokeWidth="4.500" />
          <circle cx="18" cy="27.500" r="2.900" fill="#fff" />
          <circle cx="32" cy="5" r="12" fill="#ffc20e" />
        </Icon>
      </Task>
      <Task $ml={6}>
        <Icon $w={32} $h={36} viewBox="0 0 32 36" $plain>
          <path d="M0 0 16 8 32 0v28L16 36 0 28zM6 10v15l10 5 10-5V10l-10 5z" fill="#c02a2b" fillRule="evenodd" />
        </Icon>
      </Task>
      <Task $ml={6}>
        <Icon $w={34} viewBox="0 0 34 34" $s={1.700} $c="#2f77a4">
          <rect x="0" y="0" width="34" height="34" fill="#f5f5f5" stroke="none" />
          <path d="M17 11v12M11 17h12" strokeWidth="2.200" strokeLinecap="butt" />
          <path d="M10 6v8M6 10h8M24 6v8M20 10h8M10 20v8M6 24h8M24 20v8M20 24h8" strokeWidth="1.900" strokeLinecap="butt" />
          <path d="M17 3v5M14.500 5.500h5M17 26v5M14.500 28.500h5M5 14.500v5M2.500 17h5M29 14.500v5M26.500 17h5" strokeWidth="1.200" strokeLinecap="butt" />
        </Icon>
        <Running $w={9} $c="#9a9a9a" />
      </Task>
      <Push />
      <Icon $w={18} $h={10} viewBox="0 0 18 10" $c="#fff" $s={1.400}><path d="m.7 9 8.300-8 8.300 8" /></Icon>
      <Icon $w={25} $h={20} $ml={15} $mt={4} viewBox="0 0 25 20" $plain>
        <path d="M7 5a6.500 6.500 0 0 1 12 2q2 1 2 5L12 15z" fill="#7c7c7c" />
        <path d="M4.500 16a4.700 4.700 0 0 1 .5-10Q9 2.500 13 6l4 10z" fill="#c3c3c3" />
        <path d="M4.500 16Q2 15.500 1 13.500L12 9l4 7z" fill="#f4f4f4" />
        <circle cx="17.500" cy="13" r="6.700" fill="#fff" />
        <path d="M13.500 12a4.200 4.200 0 0 1 7.500-1.800M21.500 14a4.200 4.200 0 0 1-7.500 1.800" fill="none" stroke="#1976d2" strokeWidth="1.700" />
      </Icon>
      <Stack $ml={18} $w={40} $align="center">{"ENG\nIN"}</Stack>
      <Icon $w={25} $ml={24} viewBox="0 0 25 25" $c="#fff" $s={1.600}>
        <path d="M12 23.500A11 11 0 1 1 23.500 11M1.500 8.500h21M1.500 16.500h9.500M12.500 1q-5.500 5-5.500 11.500T12 23.500M12.500 1q5 4.500 5.300 9" />
        <circle cx="18.500" cy="18.500" r="5.500" /><path d="m14.700 22.300 7.600-7.600" />
      </Icon>
      <Icon $w={24} $h={22} $ml={12} viewBox="0 0 24 22" $c="#fff" $s={1.600}>
        <path d="M1 8v6q0 1 1 1h4l5 4.500v-17L6 7H2Q1 7 1 8zM14 8q2 3 0 6M17.300 5q4 6 0 12M20.300 2q5.500 9 0 18" />
      </Icon>
      <Icon $w={25} $h={16} $ml={12} viewBox="0 0 25 16" $c="#fff" $s={1.600}>
        <rect x="1" y="1" width="20" height="14" rx="3.500" /><rect x="4" y="4" width="14" height="8" rx="1" fill="#fff" stroke="none" />
        <path d="M23 6v4" strokeWidth="2.500" />
      </Icon>
      <Stack $ml={12} $w={100} $align="right" $ls={0.2}>{"10:23\n17-04-2023"}</Stack>
      <Icon $w={28} $plain />
    </Taskbar>
  );
}

export default function App() {
  return (
    <Screen>
      <Global />
      <TopTabs />
      <Navigation />
      <Body>
        <Viewer>
          <Pane>
            <PdfToolbar />
            <Canvas>
              <Sheet><Dashboard /></Sheet>
            </Canvas>
          </Pane>
          <Scrollbar>
            <Icon $w={14} $h={10} viewBox="0 0 14 10" $plain><path d="M6 .7q1-1 2 0l5.500 7.800q.5 1.500-1 1.500h-11Q0 10 .5 8.500z" fill="#8b8b8b" /></Icon>
            <Thumb />
            <Icon $w={14} $h={10} viewBox="0 0 14 10" $plain><path d="M6 9.300q1 1 2 0l5.500-7.800Q14 0 12.500 0h-11Q0 0 .5 1.500z" fill="#8b8b8b" /></Icon>
          </Scrollbar>
        </Viewer>
        <EdgeSidebar />
      </Body>
      <WindowsTaskbar />
    </Screen>
  );
}
